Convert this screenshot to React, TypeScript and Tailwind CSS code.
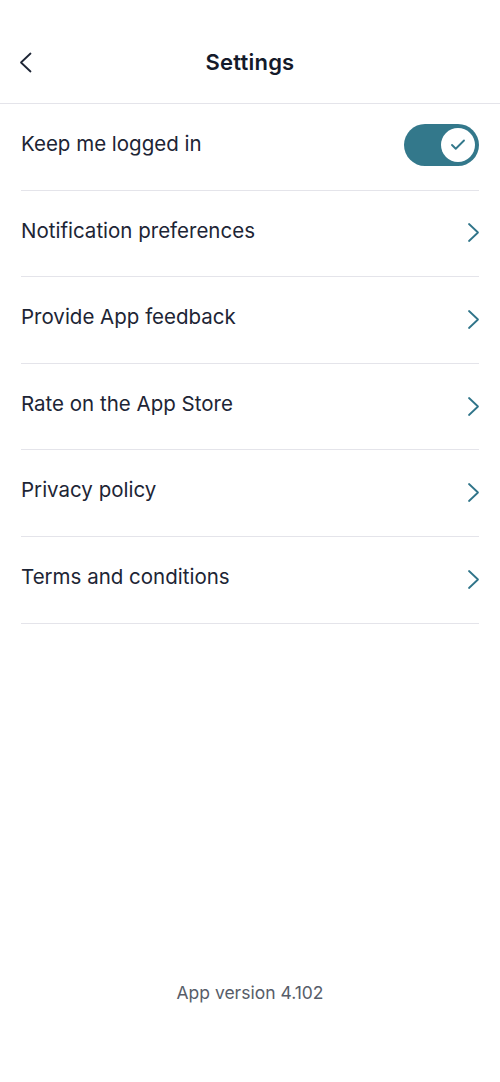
import { Check } from "lucide-react";

const rows = [
  "Notification preferences",
  "Provide App feedback",
  "Rate on the App Store",
  "Privacy policy",
  "Terms and conditions",
];

function Chevron({ dir }: { dir: "left" | "right" }) {
  return (
    <svg width="13" height="21" viewBox="0 0 13 21" fill="none" className="shrink-0">
      <polyline
        points={dir === "right" ? "2,2 11,10.5 2,19" : "11.5,1.5 2,10.5 11.5,19.5"}
        stroke="currentColor"
        strokeWidth="1.8"
        strokeLinecap="round"
        strokeLinejoin="round"
      />
    </svg>
  );
}

export default function App() {
  return (
    <div
      className="flex h-[1082px] w-[500px] flex-col bg-white text-[#1d2535]"
      style={{ fontFamily: "Inter, 'Noto Sans', sans-serif" }}
    >
      {/* header */}
      <div className="relative flex h-[104px] items-center justify-center border-b border-[#e4e4ea] pt-[22px]">
        <div className="absolute left-[19px] top-[52px] text-[#1d2535]">
          <Chevron dir="left" />
        </div>
        <h1 className="text-[22px] font-semibold tracking-[0.2px] text-[#141a2a]">Settings</h1>
      </div>

      {/* list */}
      <div className="px-[21px]">
        <div className="flex h-[86.6px] items-center justify-between border-b border-[#e4e4ea] pb-[4px]">
          <span className="text-[20.5px]">Keep me logged in</span>
          <div className="flex h-[42px] w-[75px] items-center justify-end rounded-full bg-[#33788b] pr-[4px]">
            <div className="flex h-[34px] w-[34px] items-center justify-center rounded-full bg-white">
              <Check className="h-[18px] w-[18px] text-[#33788b]" strokeWidth={2.5} />
            </div>
          </div>
        </div>
        {rows.map((r) => (
          <div
            key={r}
            className="flex h-[86.6px] items-center justify-between border-b border-[#e4e4ea] pb-[5px]"
          >
            <span className="text-[20.5px]">{r}</span>
            <div className="-mr-[1px] mt-[4px] text-[#2f7489]">
              <Chevron dir="right" />
            </div>
          </div>
        ))}
      </div>

      {/* footer */}
      <div className="mt-auto pb-[76px] text-center text-[17.5px] text-[#575d69]">
        App version 4.102
      </div>
    </div>
  );
}
